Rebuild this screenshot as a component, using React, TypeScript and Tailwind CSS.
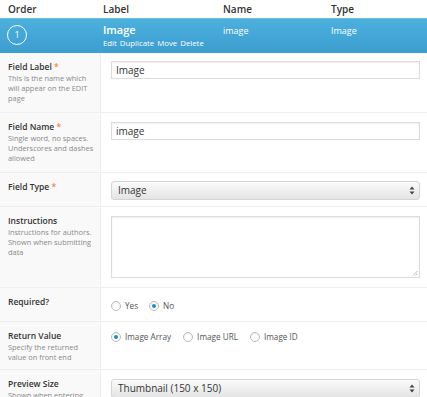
const font = { fontFamily: '"Open Sans", "Liberation Sans", sans-serif' };

function Radio({ checked, label }: { checked?: boolean; label: string }) {
  return (
    <label className="flex items-center gap-[4px] text-[8.2px] text-[#555]">
      <span className="flex h-[10px] w-[10px] items-center justify-center rounded-full border border-[#bbb] bg-white shadow-[inset_0_1px_2px_rgba(0,0,0,0.08)]">
        {checked && <span className="h-[4px] w-[4px] rounded-full bg-[#1e8cbe]" />}
      </span>
      {label}
    </label>
  );
}

function SelectBox({ value }: { value: string }) {
  return (
    <div className="flex h-[19px] w-[309px] items-center justify-between rounded-[3px] border border-[#d4d4d4] bg-gradient-to-b from-[#fbfbfb] to-[#e4e4e4] pl-[6px] pr-[4px] text-[10px] text-[#333]">
      <span>{value}</span>
      <svg width="6" height="9" viewBox="0 0 6 9" aria-hidden>
        <path d="M3 0.5L5.5 3.5H0.5z" fill="#444" />
        <path d="M3 8.5L5.5 5.5H0.5z" fill="#444" />
      </svg>
    </div>
  );
}

function TextInput({ value }: { value: string }) {
  return (
    <div className="flex h-[18px] w-[309px] items-center border border-[#dcdcdc] bg-white pl-[4px] text-[10px] text-[#333] shadow-[inset_0_1px_2px_rgba(0,0,0,0.07)]">
      {value}
    </div>
  );
}

function Row({
  label,
  required,
  desc,
  children,
  className,
}: {
  label: string;
  required?: boolean;
  desc?: string[];
  children: React.ReactNode;
  className?: string;
}) {
  return (
    <div className={`flex border-b border-[#eee] ${className ?? ""}`}>
      <div className="w-[101px] shrink-0 border-r border-[#eee] bg-[#f9f9f9] pl-[8px] pr-[2px] pt-[8px] pb-[9px]">
        <div className="text-[8.5px] leading-[12px] font-semibold text-[#333]">
          {label}
          {required && <span className="text-[#f0883a]"> *</span>}
        </div>
        {desc && (
          <div className="text-[7.4px] leading-[10px] whitespace-nowrap text-[#8a8a8a]">
            {desc.map((d) => (
              <div key={d}>{d}</div>
            ))}
          </div>
        )}
      </div>
      <div className="flex-1 pl-[10px]">{children}</div>
    </div>
  );
}

export default function App() {
  return (
    <div className="h-[397px] w-[427px] overflow-hidden bg-white" style={font}>
      <div className="flex h-[18px] items-center text-[10px] font-semibold text-[#333]">
        <span className="w-[103px] pl-[8px]">Order</span>
        <span className="w-[120px]">Label</span>
        <span className="w-[108px]">Name</span>
        <span>Type</span>
      </div>

      <div className="flex h-[35px] items-start border-t border-[#6cc0e6] bg-gradient-to-b from-[#4cb0dd] to-[#3c9dd0] text-white">
        <div className="flex w-[103px] pl-[7px] pt-[6px]">
          <span className="flex h-[20px] w-[20px] items-center justify-center rounded-full border border-white text-[9px]">
            1
          </span>
        </div>
        <div className="w-[120px] pt-[4px]">
          <div className="text-[11px] leading-[14px] font-semibold">Image</div>
          <div className="flex gap-[3px] text-[7.8px] leading-[12px]">
            <span>Edit</span>
            <span>Duplicate</span>
            <span>Move</span>
            <span>Delete</span>
          </div>
        </div>
        <div className="w-[108px] pt-[5px] text-[9px]">image</div>
        <div className="pt-[5px] text-[9px]">Image</div>
      </div>

      <Row label="Field Label" required desc={["This is the name which", "will appear on the EDIT", "page"]}>
        <div className="pt-[8px]">
          <TextInput value="Image" />
        </div>
      </Row>

      <Row label="Field Name" required desc={["Single word, no spaces.", "Underscores and dashes", "allowed"]}>
        <div className="pt-[9px]">
          <TextInput value="image" />
        </div>
      </Row>

      <Row label="Field Type" required className="h-[34px]">
        <div className="pt-[8px]">
          <SelectBox value="Image" />
        </div>
      </Row>

      <Row label="Instructions" desc={["Instructions for authors.", "Shown when submitting", "data"]} className="h-[81px]">
        <div className="pt-[9px]">
          <div className="relative h-[62px] w-[309px] border border-[#dcdcdc] bg-white shadow-[inset_0_1px_2px_rgba(0,0,0,0.07)]">
            <svg className="absolute right-[1px] bottom-[1px]" width="6" height="6" viewBox="0 0 6 6" aria-hidden>
              <path d="M1 5.5L5.5 1M3.5 5.5L5.5 3.5" stroke="#aaa" strokeWidth="0.8" />
            </svg>
          </div>
        </div>
      </Row>

      <Row label="Required?" className="h-[34px]">
        <div className="flex gap-[11px] pt-[12px]">
          <Radio label="Yes" />
          <Radio checked label="No" />
        </div>
      </Row>

      <Row label="Return Value" desc={["Specify the returned", "value on front end"]} className="h-[48px]">
        <div className="flex gap-[12px] pt-[9px]">
          <Radio checked label="Image Array" />
          <Radio label="Image URL" />
          <Radio label="Image ID" />
        </div>
      </Row>

      <Row label="Preview Size" desc={["Shown when entering", "data"]}>
        <div className="pt-[9px]">
          <SelectBox value="Thumbnail (150 x 150)" />
        </div>
      </Row>
    </div>
  );
}
